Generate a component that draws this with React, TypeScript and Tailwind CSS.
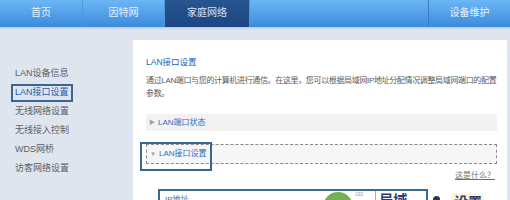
import React from 'react'

// ─── Top navigation ───────────────────────────────────────────────────────────

const TABS = [
  { label: '首页', w: 'w-[83px]' },
  { label: '因特网', w: 'w-[82px]' },
  { label: '家庭网络', w: 'w-[85px]', active: true },
]

function TopNav() {
  return (
    <div className="flex h-[27px] bg-gradient-to-b from-[#6cb6f5] to-[#3b8bdb] text-[10px] text-[#e6f1fd]">
      {TABS.map((t) => (
        <div
          key={t.label}
          className={`${t.w} flex items-center justify-center pb-[2px] border-r border-[#4f98df] ${
            t.active ? 'bg-gradient-to-b from-[#27558f] to-[#1b4683] text-[#d6e2f3]' : ''
          }`}
        >
          {t.label}
        </div>
      ))}
      <div className="flex-1" />
      <div className="w-[82px] flex items-center justify-center pb-[2px] border-l border-[#3a7fc6]">设备维护</div>
    </div>
  )
}

// ─── Sidebar ──────────────────────────────────────────────────────────────────

const MENU = ['LAN设备信息', 'LAN接口设置', '无线网络设置', '无线接入控制', 'WDS网桥', '访客网络设置']

function Sidebar() {
  return (
    <div className="w-[133px] shrink-0 pt-[34px] pl-[15px] text-[9px] text-[#5b5f66]">
      {MENU.map((m, i) =>
        i === 1 ? (
          <div key={m} className="h-[19px] flex items-center">
            <span className="ml-[-4px] h-[18px] px-[2px] flex items-center border-2 border-[#3a6694] text-[#1e5eb0]">
              {m}
            </span>
          </div>
        ) : (
          <div key={m} className="h-[19px] flex items-center">
            {m}
          </div>
        )
      )}
    </div>
  )
}

// ─── Content panel ────────────────────────────────────────────────────────────

function Content() {
  return (
    <div className="relative flex-1 mt-[10px] mr-[3px] bg-white pl-[13px] pr-[10px] pt-[16px] text-[8px]">
      <div className="h-[12px] flex items-center text-[#1e62b6] text-[8.5px]">LAN接口设置</div>

      <div className="mt-[6px] leading-[13px] text-[#5a5a5a] whitespace-nowrap tracking-[-0.35px]">
        通过LAN端口与您的计算机进行通信。在这里，您可以根据局域网IP地址分配情况调整局域网端口的配置
        <br />
        参数。
      </div>

      <div className="mt-[14px] h-[17px] bg-[#f2f2f2] flex items-center pl-[3px] gap-[3px]">
        <span className="text-[6px] text-[#9aa4b0]">▶</span>
        <span className="text-[#2f6fc0]">LAN端口状态</span>
      </div>

      <div className="mt-[13px] h-[20px] border border-dashed border-[#8a8a8a] bg-[#f6f6f6] flex items-center pl-[3px] gap-[3px]">
        <span className="text-[6px] text-[#9aa4b0]">▼</span>
        <span className="text-[#2f6fc0]">LAN接口设置</span>
      </div>

      {/* annotation frame around the expanded section title */}
      <div className="absolute left-[7px] top-[102px] w-[72px] h-[29px] border-2 border-[#3a6694]" />

      <div className="mt-[6px] h-[12px] flex justify-end items-center pr-[2px]">
        <span className="text-[#6f6f6f] underline">这是什么？</span>
      </div>

      <div className="mt-[7px] ml-[12px] w-[270px] h-[30px] border-2 border-[#3b6b8c] border-b-0 flex">
        <div className="pl-[5px] pt-[3px] text-[#6a6a6a] w-[163px]">IP地址</div>
        <div className="w-[30px] h-[24px] mt-[1px] rounded-t-full bg-[#73b24e]" />
        <div className="pl-[2px] text-[5px] text-[#999]">192</div>
        <div className="ml-[12px] w-px h-full bg-[#9fb3c6]" />
        <div className="pl-[3px] pt-[2px] text-[14px] font-bold text-[#2c3878] leading-none">局域</div>
      </div>

      <div className="absolute left-[300px] top-[153px] flex items-start gap-[12px]">
        <div className="w-[7px] h-[8px] mt-[3px] rounded-t-full bg-[#2c3550]" />
        <div className="bg-[#fbf6d8] px-[2px] text-[14px] font-bold text-[#2c3878] leading-none pt-[2px]">设置</div>
      </div>
    </div>
  )
}

export default function App() {
  return (
    <div className="w-[510px] h-[200px] overflow-hidden bg-[#dfe5ee] font-['Liberation_Sans','Noto_Sans_CJK_SC',sans-serif]">
      <TopNav />
      <div className="h-[3px] bg-gradient-to-b from-[#c3cad3] to-[#dfe5ee]" />
      <div className="flex h-[170px]">
        <Sidebar />
        <Content />
      </div>
    </div>
  )
}
